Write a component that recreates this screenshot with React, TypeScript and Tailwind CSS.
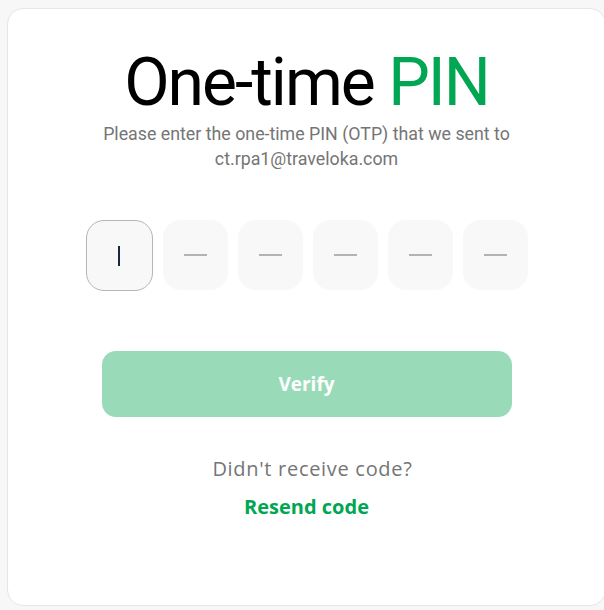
import React from "react";

export default function App() {
  const font = { fontFamily: "Roboto, 'Noto Sans', sans-serif" };
  const wide = { fontFamily: "'Open Sans', Roboto, sans-serif" };
  return (
    <div className="w-[604px] h-[610px] bg-[#f7f7f7] overflow-hidden pt-[8px] pl-[7px]" style={font}>
      <div className="w-[599px] h-[598px] bg-white border border-[#e6e6e6] rounded-[16px] flex flex-col items-center">
        <h1 className="mt-[34px] text-[66px] leading-[80px] text-black font-normal tracking-[-2px]">
          One-time <span className="text-[#00a651]">PIN</span>
        </h1>
        <p className="mt-[-2px] text-[17.8px] leading-[25px] text-[#757575] text-center">
          Please enter the one-time PIN (OTP) that we sent to
          <br />
          ct.rpa1@traveloka.com
        </p>
        <div className="mt-[49px] flex gap-[10px]">
          <div className="w-[67px] h-[71px] rounded-[18px] bg-[#f8f8f8] border border-[#b5b5b5] flex items-center justify-center">
            <div className="w-[2px] h-[20px] bg-[#1a2a3a]" />
          </div>
          {[0, 1, 2, 3, 4].map((i) => (
            <div key={i} className="w-[65px] h-[70px] rounded-[18px] bg-[#f8f8f8] flex items-center justify-center">
              <div className="w-[23px] h-[2px] bg-[#b3b3b3]" />
            </div>
          ))}
        </div>
        <button className="mt-[60px] w-[410px] h-[66px] rounded-[14px] bg-[#99dbb8] text-white text-[19px] font-bold" style={wide}>
          Verify
        </button>
        <p className="mt-[39px] ml-[12px] text-[20px] leading-[26px] tracking-[0.7px] text-[#757575]" style={wide}>Didn't receive code?</p>
        <p className="mt-[12px] text-[20px] leading-[26px] text-[#00a651] font-bold" style={wide}>Resend code</p>
      </div>
    </div>
  );
}
